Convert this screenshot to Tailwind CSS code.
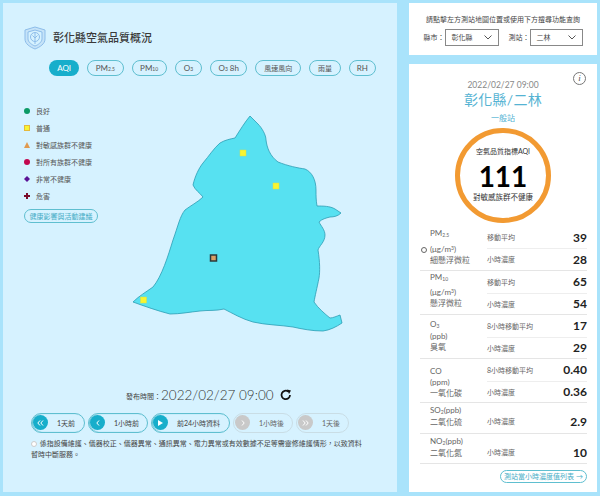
<!DOCTYPE html>
<html lang="zh-Hant">
<head>
  <meta charset="UTF-8" />
  <title>彰化縣空氣品質概況</title>
  <script src="https://cdn.jsdelivr.net/npm/@tailwindcss/browser@4"></script>
</head>
<body class="bg-[#a9e3fb] font-['Lato','Noto_Sans_CJK_TC',sans-serif] text-[#444] overflow-hidden">
  <div class="w-[600px] h-[496px] flex pl-[3px] pt-[3px] pr-[3px] pb-[4px] gap-[12px]">

    <!-- Left panel -->
    <main class="relative w-[394px] h-[489px] bg-[#d6f2ff] shrink-0">
      <!-- Map -->
      <svg class="absolute left-[-3px] top-[-3px]" width="400" height="340" viewBox="0 0 400 340">
        <path d="M250 116 L258 124 C262 128 266 135 266 140 C267 148 270 156 278 162 C288 166 298 168 305 169 C312 172 316 180 316 190 C316 196 316 200 317 206 C323 206 330 206 335 209 L341 213 C338 216 334 217 330 217 C326 218 322 219 319 222 C321 226 325 230 325 235 C325 242 319 246 318 250 C320 262 320 272 319 278 C317 288 315 296 314 302 C318 308 325 314 330 318 C333 318 337 316 340 315 L342 323 C336 327 330 330 323 331 C312 331 302 329 293 327 C280 325 266 325 253 322 C242 319 232 313 224 309 C216 311 208 310 200 311 C190 312 180 314 170 314 C158 311 144 306 133 302 C139 296 146 292 153 287 C162 276 168 256 173 240 C178 226 180 216 185 210 C190 206 198 202 203 197 C200 193 195 190 193 185 C195 176 199 168 203 163 C209 156 214 148 220 143 C225 140 230 139 235 138 C240 130 245 122 250 116 Z" fill="#57e1f1" stroke="#2c9db4" stroke-width="0.800"/>
        <rect x="240" y="150" width="6" height="6" fill="#f8f531" stroke="#d8e04a" stroke-width="0.5"/>
        <rect x="273" y="183" width="6" height="6" fill="#f8f531" stroke="#d8e04a" stroke-width="0.5"/>
        <rect x="140.500" y="297" width="6" height="6" fill="#f8f531" stroke="#d8e04a" stroke-width="0.5"/>
        <rect x="210.500" y="255" width="6" height="6" fill="#d9a066" stroke="#2b3a3c" stroke-width="1.500"/>
      </svg>

      <div class="relative px-[21px] pt-[23px]">
        <!-- Title -->
        <div class="flex items-center gap-[7px] h-[24px]">
          <svg width="22" height="24" viewBox="0 0 22 24" fill="none" stroke="#8dbdea" stroke-width="1">
            <path d="M11 1 L21 4 V13 C21 18 16 21 11 23 C6 21 1 18 1 13 V4 Z" fill="#c5e3f8"/>
            <path d="M11 4 L18 6 V13 C18 16 14 19 11 20 C8 19 4 16 4 13 V6 Z" fill="#d6f2ff"/>
            <circle cx="11" cy="11" r="4.500"/>
            <path d="M11 7 V18 M11 12 L8.500 9.500 M11 12 L13.500 9.500"/>
          </svg>
          <h1 class="text-[11px] leading-[24px] font-medium text-[#3a3a3a]">彰化縣空氣品質概況</h1>
        </div>

        <!-- Tabs -->
        <div class="flex items-center ml-[25px] mt-[10px] gap-[8px] text-[8px] text-[#555]">
          <span class="w-[31px] h-[16px] rounded-full bg-[#17aecb] text-white flex items-center justify-center">AQI</span>
          <span class="w-[37px] h-[16px] rounded-full border border-[#5fbfd0] flex items-center justify-center">PM<sub class="text-[5px] leading-none">2.5</sub></span>
          <span class="w-[36px] h-[16px] rounded-full border border-[#5fbfd0] flex items-center justify-center">PM<sub class="text-[5px] leading-none">10</sub></span>
          <span class="w-[28px] h-[16px] rounded-full border border-[#5fbfd0] flex items-center justify-center">O<sub class="text-[5px] leading-none">3</sub></span>
          <span class="w-[38px] h-[16px] rounded-full border border-[#5fbfd0] flex items-center justify-center">O<sub class="text-[5px] leading-none">3</sub>&nbsp;8h</span>
          <span class="w-[47px] h-[16px] rounded-full border border-[#5fbfd0] text-[7px] flex items-center justify-center">風速風向</span>
          <span class="w-[32px] h-[16px] rounded-full border border-[#5fbfd0] text-[7px] flex items-center justify-center">雨量</span>
          <span class="w-[28px] h-[16px] rounded-full border border-[#5fbfd0] flex items-center justify-center">RH</span>
        </div>

        <!-- Legend -->
        <ul class="mt-[29px] flex flex-col gap-[5.1px] text-[7px] text-[#555]">
          <li class="flex items-center gap-[6px] h-[12px]"><span class="w-[6px] h-[6px] rounded-full bg-[#0b9a66]"></span>良好</li>
          <li class="flex items-center gap-[6px] h-[12px]"><span class="w-[6px] h-[6px] bg-[#f8f531] border-[0.5px] border-[#e5b93c]"></span>普通</li>
          <li class="flex items-center gap-[6px] h-[12px]"><svg width="6" height="6" viewBox="0 0 6 6"><path d="M3 0 L6 6 H0 Z" fill="#e09a50"/></svg>對敏感族群不健康</li>
          <li class="flex items-center gap-[6px] h-[12px]"><span class="w-[6px] h-[6px] rounded-full bg-[#c2084f]"></span>對所有族群不健康</li>
          <li class="flex items-center gap-[6px] h-[12px]"><svg width="6" height="6" viewBox="0 0 6 6"><path d="M3 0 L6 3 L3 6 L0 3 Z" fill="#5b1295"/></svg>非常不健康</li>
          <li class="flex items-center gap-[6px] h-[12px]"><svg width="6" height="6" viewBox="0 0 6 6"><path d="M2 0 H4 V2 H6 V4 H4 V6 H2 V4 H0 V2 H2 Z" fill="#7a0c2a"/></svg>危害</li>
        </ul>
        <span class="mt-[6.500px] w-[74px] h-[14px] rounded-full border border-[#5fbfd0] text-[#47adc6] text-[7px] flex items-center justify-center">健康影響與活動建議</span>

        <!-- Publish time -->
        <div class="mt-[163px] ml-[102px] flex items-center h-[18px]">
          <span class="text-[7px] text-[#444] mt-[2px]">發布時間：</span>
          <span class="text-[13.500px] font-light text-[#333]">2022/02/27 09:00</span>
          <svg class="ml-[6px]" width="12" height="12" viewBox="0 0 24 24" fill="none" stroke="#111" stroke-width="3.500"><path d="M20 12 A8.500 8.500 0 1 1 16.500 5"/><path d="M14 1 L22 3 L18 10 Z" fill="#111" stroke="none"/></svg>
        </div>

        <!-- Time buttons -->
        <div class="mt-[9px] ml-[7px] flex items-center gap-[3px] text-[7px]">
          <span class="w-[54px] h-[20px] rounded-full border border-[#5fbfd0] flex items-center pl-[1px] shadow-[inset_1px_0_1px_#5fbfd0]"><span class="w-[15px] h-[15px] rounded-full bg-[#17aecb] flex items-center justify-center shrink-0"><svg width="7" height="6" viewBox="0 0 7 6" fill="none" stroke="#fff"><path d="M3 0.500 L0.800 3 L3 5.500 M6 0.500 L3.800 3 L6 5.500"/></svg></span><span class="ml-[9px]">1天前</span></span>
          <span class="w-[60px] h-[20px] rounded-full border border-[#5fbfd0] flex items-center pl-[1px] shadow-[inset_1px_0_1px_#5fbfd0]"><span class="w-[15px] h-[15px] rounded-full bg-[#17aecb] flex items-center justify-center shrink-0"><svg width="4" height="6" viewBox="0 0 4 6" fill="none" stroke="#fff"><path d="M3 0.500 L0.800 3 L3 5.500"/></svg></span><span class="ml-[9px]">1小時前</span></span>
          <span class="w-[79px] h-[20px] rounded-full border border-[#5fbfd0] flex items-center pl-[1px] shadow-[inset_1px_0_1px_#5fbfd0]"><span class="w-[15px] h-[15px] rounded-full bg-[#17aecb] flex items-center justify-center shrink-0"><svg width="5" height="6" viewBox="0 0 5 6"><path d="M0 0 L5 3 L0 6 Z" fill="#fff"/></svg></span><span class="ml-[9px]">前24小時資料</span></span>
          <span class="w-[60px] h-[20px] rounded-full border border-[#c9dde5] flex items-center pl-[1px] text-[#666]"><span class="w-[15px] h-[15px] rounded-full bg-[#c9c9c9] flex items-center justify-center shrink-0"><svg width="4" height="6" viewBox="0 0 4 6" fill="none" stroke="#fff"><path d="M1 0.500 L3.200 3 L1 5.500"/></svg></span><span class="ml-[9px]">1小時後</span></span>
          <span class="w-[53px] h-[20px] rounded-full border border-[#c9dde5] flex items-center pl-[1px] text-[#666]"><span class="w-[15px] h-[15px] rounded-full bg-[#c9c9c9] flex items-center justify-center shrink-0"><svg width="7" height="6" viewBox="0 0 7 6" fill="none" stroke="#fff"><path d="M1 0.500 L3.200 3 L1 5.500 M4 0.500 L6.200 3 L4 5.500"/></svg></span><span class="ml-[9px]">1天後</span></span>
        </div>

        <!-- Note -->
        <p class="mt-[5px] ml-[7px] w-[335px] text-[7px] leading-[11px] text-[#444]"><span class="inline-block w-[6px] h-[6px] rounded-full bg-white border border-[#ccc] mr-[1px] align-[-1px]"></span> 係指設備維護、儀器校正、儀器異常、通訊異常、電力異常或有效數據不足等需靈修維護情形，以致資料暫時中斷服務。</p>
      </div>
    </main>

    <!-- Right column -->
    <aside class="w-[188px] shrink-0 flex flex-col gap-[9px]">
      <!-- Search -->
      <section class="h-[52px] bg-white pt-[11px] flex flex-col items-center text-[7px] text-[#444]">
        <p class="leading-[10px]">請點擊左方測站地圖位置或使用下方搜尋功能查詢</p>
        <div class="mt-[5px] flex items-center">
          <span>縣市：</span>
          <div class="w-[54px] h-[17px] border border-[#888] flex items-center justify-between px-[6px]">彰化縣<svg width="8" height="5" viewBox="0 0 8 5" fill="none" stroke="#555"><path d="M0.500 0.500 L4 4 L7.500 0.500"/></svg></div>
          <span class="ml-[10px]">測站：</span>
          <div class="w-[53px] h-[17px] border border-[#888] flex items-center justify-between px-[6px]">二林<svg width="8" height="5" viewBox="0 0 8 5" fill="none" stroke="#555"><path d="M0.500 0.500 L4 4 L7.500 0.500"/></svg></div>
        </div>
      </section>

      <!-- Station card -->
      <section class="relative h-[428px] bg-white flex flex-col items-center">
        <span class="absolute right-[11px] top-[8px] w-[13px] h-[13px] rounded-full border border-[#777] text-[#555] text-[9px] italic font-['Liberation_Serif',serif] flex items-center justify-center">i</span>
        <p class="mt-[15px] text-[8.500px] leading-[12px] text-[#888]">2022/02/27 09:00</p>
        <h2 class="text-[14px] leading-[18px] text-[#55b3d3] tracking-[0.3px]">彰化縣/二林</h2>
        <p class="mt-[4px] text-[8px] leading-[10px] text-[#55b3d3]">一般站</p>
        <div class="mt-[5px] w-[96px] h-[95px] rounded-full border-[5px] border-[#f29a32] flex flex-col items-center shrink-0">
          <span class="mt-[13px] text-[7px] leading-[10px] text-[#333]">空氣品質指標AQI</span>
          <span class="mt-[6px] text-[28px] leading-[28px] font-bold text-black">111</span>
          <span class="mt-[3px] text-[7.500px] leading-[10px] text-[#333]">對敏感族群不健康</span>
        </div>

        <!-- Pollutants -->
        <div class="mt-[4px] w-[167px] ml-[1px] text-[#666]">
          <div class="flex h-[44px] border-b border-[#e5e5e5]">
            <div class="relative w-[67px] pl-[10px] text-[8px] leading-[11px] pt-[1px]"><span class="absolute left-[1px] top-[20px] w-[6px] h-[6px] rounded-full border border-[#666]"></span>PM<sub class="text-[5px] leading-none">2.5</sub><br /><span class="block mt-[5px]">(μg/m<sup class="text-[5px] leading-none">3</sup>)</span>細懸浮微粒</div>
            <div class="flex-1"><div class="flex items-center justify-between h-[22px] border-b border-[#eee] text-[7px]">移動平均<b class="text-[12px] text-[#222]">39</b></div><div class="flex items-center justify-between h-[21px] text-[7px]">小時濃度<b class="text-[12px] text-[#222]">28</b></div></div>
          </div>
          <div class="flex h-[44px] border-b border-[#e5e5e5]">
            <div class="w-[67px] pl-[10px] text-[8px] leading-[11px] pt-[1px]">PM<sub class="text-[5px] leading-none">10</sub><br /><span class="block mt-[4px]">(μg/m<sup class="text-[5px] leading-none">3</sup>)</span>懸浮微粒</div>
            <div class="flex-1"><div class="flex items-center justify-between h-[23px] border-b border-[#eee] text-[7px]">移動平均<b class="text-[12px] text-[#222]">65</b></div><div class="flex items-center justify-between h-[20px] text-[7px]">小時濃度<b class="text-[12px] text-[#222]">54</b></div></div>
          </div>
          <div class="flex h-[44px] border-b border-[#e5e5e5]">
            <div class="w-[67px] pl-[10px] text-[8px] leading-[11px] pt-[4px]">O<sub class="text-[5px] leading-none">3</sub><br /><span class="block mt-[1px]">(ppb)</span>臭氧</div>
            <div class="flex-1"><div class="flex items-center justify-between h-[23px] border-b border-[#eee] text-[7px]">8小時移動平均<b class="text-[12px] text-[#222]">17</b></div><div class="flex items-center justify-between h-[20px] text-[7px]">小時濃度<b class="text-[12px] text-[#222]">29</b></div></div>
          </div>
          <div class="flex h-[44px] border-b border-[#e5e5e5]">
            <div class="w-[67px] pl-[10px] text-[8px] leading-[11px] pt-[7px]">CO<br /><span class="block">(ppm)</span>一氧化碳</div>
            <div class="flex-1"><div class="flex items-center justify-between h-[23px] border-b border-[#eee] text-[7px]">8小時移動平均<b class="text-[12px] text-[#222]">0.40</b></div><div class="flex items-center justify-between h-[20px] text-[7px]">小時濃度<b class="text-[12px] text-[#222]">0.36</b></div></div>
          </div>
          <div class="flex h-[31px] border-b border-[#e5e5e5]">
            <div class="w-[67px] pl-[10px] text-[8px] leading-[12px] pt-[1px]">SO<sub class="text-[5px] leading-none">2</sub>(ppb)<br />二氧化硫</div>
            <div class="flex-1 flex items-center justify-between pt-[7px] text-[7px]">小時濃度<b class="text-[12px] text-[#222]">2.9</b></div>
          </div>
          <div class="flex h-[30px] border-b border-[#e5e5e5]">
            <div class="w-[67px] pl-[10px] text-[8px] leading-[12px] pt-[1px]">NO<sub class="text-[5px] leading-none">2</sub>(ppb)<br />二氧化氮</div>
            <div class="flex-1 flex items-center justify-between pt-[8px] text-[7px]">小時濃度<b class="text-[12px] text-[#222]">10</b></div>
          </div>
        </div>
        <span class="mt-[6px] ml-[81px] w-[87px] h-[13px] rounded-full border border-[#5fbfd0] text-[#47adc6] text-[7px] flex items-center justify-center whitespace-nowrap">測站當小時濃度值列表 →</span>
      </section>
    </aside>
  </div>
</body>
</html>
